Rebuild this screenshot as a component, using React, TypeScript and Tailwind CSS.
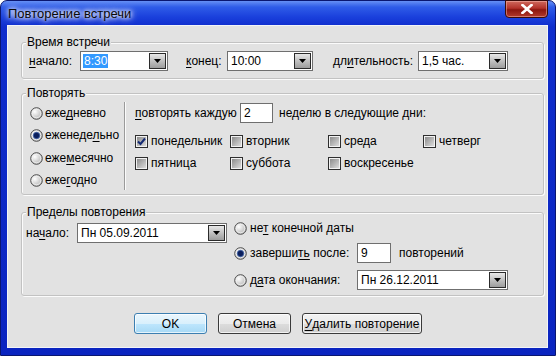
import React from "react";

const Radio = ({ on }: { on?: boolean }) => (
  <svg width="13" height="13" viewBox="0 0 13 13" className="shrink-0">
    <defs>
      <radialGradient id={on ? "rOn" : "rOff"} cx="0.35" cy="0.35" r="0.8">
        <stop offset="0" stopColor="#ffffff" />
        <stop offset="1" stopColor="#a9a9a9" />
      </radialGradient>
    </defs>
    <circle cx="6.5" cy="6.5" r="5.8" fill={`url(#${on ? "rOn" : "rOff"})`} stroke="#4e4e4e" strokeWidth="1" />
    <circle cx="6.5" cy="6.5" r="4.3" fill="none" stroke="#f4f4f4" strokeWidth="0.8" />
    {on && <circle cx="6.5" cy="6.5" r="3.2" fill="#0b1f5c" stroke="#3a5fa8" strokeWidth="0.8" />}
  </svg>
);

const Check = ({ on, label }: { on?: boolean; label: string }) => (
  <div className="flex items-center">
    <span className="flex h-[13px] w-[13px] shrink-0 border border-[#2e2e2e] bg-[#f2f2f2] p-[1px]">
      <span className="flex flex-1 items-center justify-center bg-[linear-gradient(135deg,#8c8c8c,#dcdcdc)]">
        {on && (
          <svg width="9" height="9" viewBox="0 0 9 9">
            <path d="M1 4.5 L3.5 7 L8 1.5" fill="none" stroke="#142a73" strokeWidth="2" />
          </svg>
        )}
      </span>
    </span>
    <span className="ml-[3px]">{label}</span>
  </div>
);

const DropBtn = () => (
  <span className="mr-[1px] flex h-[16px] w-[17px] items-center justify-center border border-[#2b2b2b] bg-[linear-gradient(180deg,#e8e8e8,#b9b9b9_60%,#9d9d9d)]">
    <svg width="7" height="4" viewBox="0 0 7 4">
      <path d="M0 0 H7 L3.5 4 Z" fill="#000" />
    </svg>
  </span>
);

const Combo = ({ w, value, sel }: { w: string; value: string; sel?: boolean }) => (
  <div className={`flex h-[20px] ${w} shrink-0 items-center border border-[#6f6f6f] bg-white`}>
    <div className="flex-1 pl-[2px] leading-[16px]">
      {sel ? <span className="bg-[#3399ff] px-[1px] text-white">{value}</span> : <span className="pl-[1px]">{value}</span>}
    </div>
    <DropBtn />
  </div>
);

const U = ({ children }: { children: React.ReactNode }) => <span className="underline underline-offset-[2px]">{children}</span>;

const Btn = ({ w, def, children }: { w: string; def?: boolean; children: React.ReactNode }) => (
  <div
    className={`flex h-[21px] ${w} items-center justify-center rounded-[3px] border ${
      def
        ? "border-[#3c7fb1] bg-[linear-gradient(180deg,#eaf6fd_0%,#d9f0fc_50%,#bee6fd_51%,#a7d9f5_100%)]"
        : "border-[#3a3a3a] bg-[linear-gradient(180deg,#f2f2f2_0%,#ebebeb_50%,#dddddd_51%,#cfcfcf_100%)]"
    } shadow-[inset_0_0_0_1px_rgba(255,255,255,0.7)]`}
  >
    {children}
  </div>
);

const Group = ({ title, h, mt, children }: { title: string; h: string; mt: string; children: React.ReactNode }) => (
  <fieldset className={`${mt} ${h} rounded-[3px] border border-[#c2c2c2] shadow-[inset_1px_1px_0_#fbfbfb,1px_1px_0_#fbfbfb]`}>
    <legend className="ml-[4px] bg-[#e2e2e2] px-[1px] leading-[14px]">{title}</legend>
    {children}
  </fieldset>
);

export default function App() {
  return (
    <div className="flex h-[356px] w-[556px] flex-col rounded-t-[7px] border border-[#0a1670] bg-[linear-gradient(180deg,#6690f5_0px,#2f5ce8_6px,#1a40dc_16px,#0f2dcc_26px,#0a24c0_100%)] pb-[7px] pl-[6px] pr-[7px] font-['Liberation_Sans',Arial,sans-serif] text-[12px] text-black">
      <div className="flex h-[24px] shrink-0 items-start justify-between">
        <span className="mt-[5px] pl-[1px] text-[13px] leading-[16px] text-[#0a0a0a] [text-shadow:0_0_4px_#ffffff,0_0_6px_#ffffff,0_0_8px_#dfe8ff]">
          Повторение встречи
        </span>
        <div className="-mt-[1px] flex h-[18px] w-[43px] items-center justify-center rounded-b-[4px] border border-[#3a0a08] bg-[linear-gradient(180deg,#d06a5e_0%,#b3322a_45%,#8c160e_55%,#b23a2c_100%)] shadow-[inset_0_0_0_1px_rgba(255,200,190,0.45)]">
          <svg width="12" height="10" viewBox="0 0 12 10">
            <path d="M1.5 1 L10.5 9 M10.5 1 L1.5 9" stroke="#ffffff" strokeWidth="2.6" strokeLinecap="square" />
          </svg>
        </div>
      </div>

      <div className="flex flex-1 flex-col border border-[#f2f4f8] bg-[#e2e2e2] pl-[13px] pr-[3px]">
        <Group title="Время встречи" mt="mt-[9px]" h="h-[44px]">
          <div className="flex items-center pl-[7px] pt-[2px]">
            <span className="w-[51px]">
              <U>н</U>ачало:
            </span>
            <Combo w="w-[88px]" value="8:30" sel />
            <span className="ml-[18px] w-[41px]">
              <U>к</U>онец:
            </span>
            <Combo w="w-[86px]" value="10:00" />
            <span className="ml-[20px] w-[85px]">
              дл<U>и</U>тельность:
            </span>
            <Combo w="w-[90px]" value="1,5 час." />
          </div>
        </Group>

        <Group title="Повторять" mt="mt-[7px]" h="h-[109px]">
          <div className="flex pt-[2px]">
            <div className="flex w-[102px] flex-col pl-[8px]">
              <div className="flex h-[22px] items-center gap-[2px]">
                <Radio />
                <span>
                  еже<U>д</U>невно
                </span>
              </div>
              <div className="flex h-[22px] items-center gap-[2px]">
                <Radio on />
                <span>
                  еженеде<U>л</U>ьно
                </span>
              </div>
              <div className="mt-[1px] flex h-[22px] items-center gap-[2px]">
                <Radio />
                <span>
                  еже<U>м</U>есячно
                </span>
              </div>
              <div className="flex h-[22px] items-center gap-[2px]">
                <Radio />
                <span>
                  еже<U>г</U>одно
                </span>
              </div>
            </div>
            <div className="h-[88px] w-[2px] border-l border-[#9a9a9a] bg-[#fbfbfb]" />
            <div className="flex flex-col pl-[9px]">
              <div className="flex h-[22px] items-center">
                <span className="w-[105px]">
                  <U>п</U>овторять каждую
                </span>
                <div className="flex h-[20px] w-[33px] items-center border border-[#6f6f6f] bg-white pl-[3px]">2</div>
                <span className="ml-[6px]">неделю в следующие дни:</span>
              </div>
              <div className="mt-[11px] flex h-[12px] items-center">
                <div className="w-[95px]">
                  <Check on label="понедельник" />
                </div>
                <div className="w-[98px]">
                  <Check label="вторник" />
                </div>
                <div className="w-[95px]">
                  <Check label="среда" />
                </div>
                <Check label="четверг" />
              </div>
              <div className="mt-[10px] flex h-[12px] items-center">
                <div className="w-[95px]">
                  <Check label="пятница" />
                </div>
                <div className="w-[98px]">
                  <Check label="суббота" />
                </div>
                <Check label="воскресенье" />
              </div>
            </div>
          </div>
        </Group>

        <Group title="Пределы повторения" mt="mt-[10px]" h="h-[91px]">
          <div className="flex">
            <div className="flex items-center self-start pl-[4px] pt-[4px]">
              <span className="w-[51px]">
                на<U>ч</U>ало:
              </span>
              <Combo w="w-[150px]" value="Пн 05.09.2011" />
            </div>
            <div className="ml-[7px] flex flex-col">
              <div className="flex h-[18px] items-center gap-[3px]">
                <Radio />
                <span>
                  не<U>т</U> конечной даты
                </span>
              </div>
              <div className="mt-[6px] flex h-[20px] items-center">
                <Radio on />
                <span className="ml-[3px] w-[107px]">
                  заверши<U>ть</U> после:
                </span>
                <div className="flex h-[20px] w-[34px] items-center border border-[#6f6f6f] bg-white pl-[3px]">9</div>
                <span className="ml-[8px]">повторений</span>
              </div>
              <div className="mt-[7px] flex h-[20px] items-center">
                <Radio />
                <span className="ml-[3px] w-[107px]">
                  д<U>а</U>та окончания:
                </span>
                <Combo w="w-[151px]" value="Пн 26.12.2011" />
              </div>
            </div>
          </div>
        </Group>

        <div className="ml-[113px] mt-[17px] flex gap-[11px]">
          <Btn w="w-[73px]" def>
            OK
          </Btn>
          <Btn w="w-[73px]">Отмена</Btn>
          <Btn w="w-[120px]">
            <U>У</U>далить повторение
          </Btn>
        </div>
      </div>
    </div>
  );
}
